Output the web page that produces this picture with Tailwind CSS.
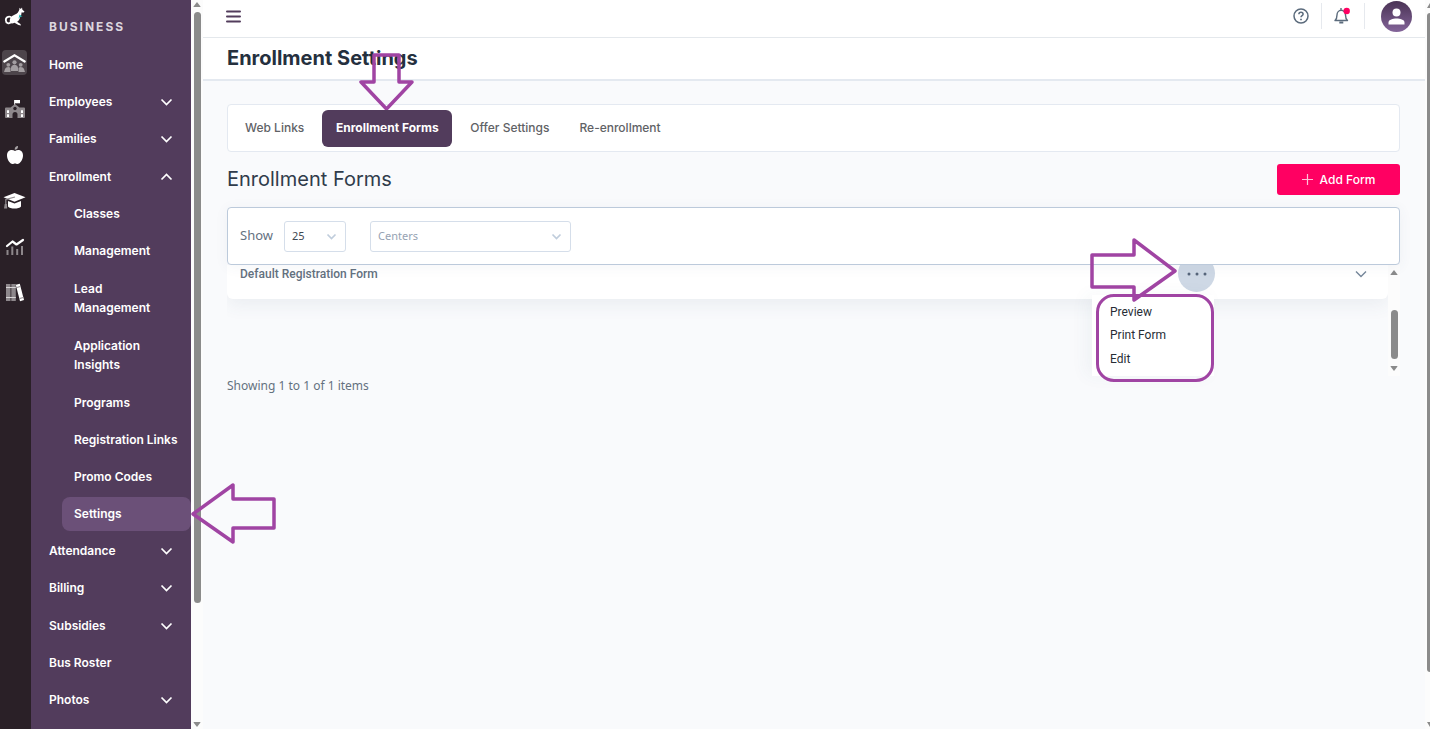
<!DOCTYPE html>
<html lang="en">
<head>
<meta charset="utf-8">
<meta name="viewport" content="width=device-width, initial-scale=1">
<title>Enrollment Settings</title>
<script src="https://cdn.jsdelivr.net/npm/@tailwindcss/browser@4"></script>
</head>
<body class="flex h-screen overflow-hidden bg-[#f9fafc] font-['Inter',sans-serif] text-[#52606f]">

<!-- Product rail -->
<nav aria-label="Products" class="flex w-[31px] shrink-0 flex-col items-start gap-[21px] bg-[#2a2027] pt-1 pl-0.5">
  <a href="#" aria-label="Dashboard" class="grid size-[25px] place-items-center">
    <svg width="22" height="20" viewBox="0 0 22 20"><path d="M8 11C6 8.800 1.800 9.500 1.800 13c0 3.500 3.500 4.200 5.200 2.200" fill="none" stroke="#fff" stroke-width="1.800" stroke-linecap="round"/><path d="M5.800 14.500C5.500 10.500 8.500 8.500 11 7.500c2.300-1 3.500-2.500 4.300-4.800L15.500.700l1.300 1.200L18 .500l.4 2.200 2.100 1.900-.8 1-2.200-.1c0 2.200-.6 3.500-1.400 4.700-.5 2.300-1.500 3.700-3 4.500l3.300 2.300.6 1.500-2.500-.6-4-2.100c-1.500.8-3 .9-4.200.3z" fill="#fff"/><path d="M15.500 7.500l3 1.900-2.300.3-1.700 2z" fill="#19b5b0"/></svg>
  </a>
  <a href="#" aria-label="Business" aria-current="true" class="grid size-[25px] place-items-center rounded bg-[#4d454b]">
    <svg width="23" height="20" viewBox="0 0 23 20"><path d="M1.300 8.500L11.500 2.300l10.200 6.200" fill="none" stroke="#fff" stroke-width="2.200" stroke-linecap="round"/><g fill="#a39ea1"><circle cx="11.500" cy="9.300" r="2.100"/><path d="M8 18v-3c0-2 1.500-3.300 3.500-3.300s3.500 1.300 3.500 3.300v3z"/><circle cx="5.300" cy="11.800" r="1.900"/><path d="M1 19l1-3c.5-1.300 1.800-2 3.300-2 1 0 1.700.4 2.200 1V19z"/><circle cx="17.700" cy="11.800" r="1.900"/><path d="M22 19l-1-3c-.5-1.300-1.800-2-3.300-2-1 0-1.700.4-2.200 1V19z"/></g></svg>
  </a>
  <a href="#" aria-label="School" class="grid size-[25px] place-items-center">
    <svg width="22" height="20" viewBox="0 0 22 20"><path d="M10.500 1v5" stroke="#d4d1d3"/><path d="M10.500 1H16v3.300h-5.500z" fill="#fff"/><path d="M1 9.500q0-1 1-1h4.500L11 5l4.500 3.500H20q1 0 1 1V18q0 1-1 1h-6.500v-3.500a2.500 2.500 0 00-5 0V19H2q-1 0-1-1z" fill="#8d878b"/><circle cx="11" cy="9.500" r="1.700" fill="#2a2027"/><g fill="#fff"><path d="M3 11.300h2V14H3zM3 15.300h2V18H3zM17 11.300h2V14h-2zM17 15.300h2V18h-2z"/></g></svg>
  </a>
  <a href="#" aria-label="Nutrition" class="grid size-[25px] place-items-center">
    <svg width="18" height="20" viewBox="0 0 18 20"><path d="M9 6C6.500 4.300 1 4.500 1 10.500 1 14.500 4 19 6.500 19c1 0 1.500-.5 2.500-.5s1.500.5 2.500.5c2.500 0 5.500-4.500 5.500-8.500C17 4.500 11.500 4.300 9 6z" fill="#fff"/><path d="M8.700 4.800C8.500 2.500 10 1 12 1c.2 2.300-1 3.800-3.300 3.800z" fill="#aaa5a8"/></svg>
  </a>
  <a href="#" aria-label="Academy" class="grid size-[25px] place-items-center">
    <svg width="23" height="18" viewBox="0 0 23 18"><path d="M11.500 1L22.500 5.300 11.500 9.800.5 5.300z" fill="#fff"/><path d="M5 9l6.500 2.500L18 9v5.500c-2 2.700-11 2.700-13 0z" fill="#fff"/><path d="M12 5L2.800 7.500V13" fill="none" stroke="#918b8f" stroke-width="1.200"/><path d="M1.700 12h2.100l.4 4.500H1z" fill="#918b8f"/></svg>
  </a>
  <a href="#" aria-label="Reports" class="grid size-[25px] place-items-center">
    <svg width="20" height="18" viewBox="0 0 20 18"><path d="M2 8l5.500-4.500 4 3L18 2" fill="none" stroke="#fff" stroke-width="2.200" stroke-linecap="round" stroke-linejoin="round"/><path d="M2.500 12v5M7.300 8.500V17M12.200 11v6M17 8v9" stroke="#8d878b" stroke-width="2"/></svg>
  </a>
  <a href="#" aria-label="Library" class="grid size-[25px] place-items-center">
    <svg width="20" height="19" viewBox="0 0 20 19"><path d="M1 1h4.500v17H1zM6.300 1h4.500v17H6.300z" fill="#8d878b"/><path d="M1 4.500h9.800M1 14.500h9.800" stroke="#d8d5d7"/><path d="M10.800 1.800l4-1L19 17l-4 1.200z" fill="#fff"/><path d="M11.500 4.500l4-1M14.500 15.500l4-1" stroke="#8d878b" stroke-width="1"/></svg>
  </a>
</nav>

<!-- Section menu -->
<nav aria-label="Business" class="flex w-40 shrink-0 flex-col bg-[#523c5c] pt-[19px] pb-3 text-xs font-semibold text-white">
  <h2 class="pl-[18px] text-xs leading-4 font-bold tracking-[2px] text-[#dcd6df]">BUSINESS</h2>
  <ul class="mt-[13px] flex grow flex-col justify-between">
    <li><a href="#" class="block py-2 pl-[18px] leading-[18px]">Home</a></li>
    <li><button class="flex w-full items-center justify-between py-2 pr-[18px] pl-[18px] leading-[18px]">Employees<svg width="13" height="8" viewBox="0 0 13 8" fill="none" stroke="currentColor" stroke-width="1.700"><path d="M1.500 1.500l5 5 5-5"/></svg></button></li>
    <li><button class="flex w-full items-center justify-between py-2 pr-[18px] pl-[18px] leading-[18px]">Families<svg width="13" height="8" viewBox="0 0 13 8" fill="none" stroke="currentColor" stroke-width="1.700"><path d="M1.500 1.500l5 5 5-5"/></svg></button></li>
    <li><button aria-expanded="true" class="flex w-full items-center justify-between py-2 pr-[18px] pl-[18px] leading-[18px]">Enrollment<svg width="13" height="8" viewBox="0 0 13 8" fill="none" stroke="currentColor" stroke-width="1.700"><path d="M1.500 6.500l5-5 5 5"/></svg></button></li>
    <li class="ml-[31px]"><a href="#" class="block py-2 pl-3 leading-[18px]">Classes</a></li>
    <li class="ml-[31px]"><a href="#" class="block py-2 pl-3 leading-[18px]">Management</a></li>
    <li class="ml-[31px]"><a href="#" class="block py-2 pl-3 leading-[19px]">Lead<br>Management</a></li>
    <li class="ml-[31px]"><a href="#" class="block py-2 pl-3 leading-[19px]">Application<br>Insights</a></li>
    <li class="ml-[31px]"><a href="#" class="block py-2 pl-3 leading-[18px]">Programs</a></li>
    <li class="ml-[31px]"><a href="#" class="block py-2 pl-3 leading-[18px] whitespace-nowrap">Registration Links</a></li>
    <li class="ml-[31px]"><a href="#" class="block py-2 pl-3 leading-[18px]">Promo Codes</a></li>
    <li class="relative ml-[31px]"><a href="#" aria-current="page" class="block rounded-lg bg-[#6b5078] py-2 pl-3 leading-[18px]">Settings</a>
      <svg aria-hidden="true" class="absolute top-1/2 left-full z-30 -translate-y-1/2" width="86" height="62" viewBox="0 0 86 62" fill="none" stroke="#a044a3" stroke-width="3.500" stroke-linejoin="round"><path d="M2 31L42 2v14h41v29H42v14z"/></svg>
    </li>
    <li><button class="flex w-full items-center justify-between py-2 pr-[18px] pl-[18px] leading-[18px]">Attendance<svg width="13" height="8" viewBox="0 0 13 8" fill="none" stroke="currentColor" stroke-width="1.700"><path d="M1.500 1.500l5 5 5-5"/></svg></button></li>
    <li><button class="flex w-full items-center justify-between py-2 pr-[18px] pl-[18px] leading-[18px]">Billing<svg width="13" height="8" viewBox="0 0 13 8" fill="none" stroke="currentColor" stroke-width="1.700"><path d="M1.500 1.500l5 5 5-5"/></svg></button></li>
    <li><button class="flex w-full items-center justify-between py-2 pr-[18px] pl-[18px] leading-[18px]">Subsidies<svg width="13" height="8" viewBox="0 0 13 8" fill="none" stroke="currentColor" stroke-width="1.700"><path d="M1.500 1.500l5 5 5-5"/></svg></button></li>
    <li><a href="#" class="block py-2 pl-[18px] leading-[18px]">Bus Roster</a></li>
    <li><button class="flex w-full items-center justify-between py-2 pr-[18px] pl-[18px] leading-[18px]">Photos<svg width="13" height="8" viewBox="0 0 13 8" fill="none" stroke="currentColor" stroke-width="1.700"><path d="M1.500 1.500l5 5 5-5"/></svg></button></li>
  </ul>
</nav>

<!-- Menu scrollbar -->
<div aria-hidden="true" class="flex w-3 shrink-0 flex-col items-center bg-[#fcfcfc] py-0.5 text-[#8b8b8b]">
  <svg width="8" height="6" viewBox="0 0 8 6" fill="currentColor"><path d="M4 0l3.500 4.500q0 .5-.5.500H1q-.5 0-.5-.500z"/></svg>
  <div class="mt-1 flex w-[7px] grow flex-col">
    <div class="h-5/6 rounded-full bg-[#8b8b8b]"></div>
  </div>
  <svg width="8" height="6" viewBox="0 0 8 6" fill="currentColor"><path d="M4 6l3.500-4.500Q7.500 1 7 1H1q-.5 0-.5.500z"/></svg>
</div>

<div class="flex min-w-0 grow flex-col">
  <header class="flex h-[38px] items-center justify-between border-b border-[#e4e8ec] bg-white pr-[13px] pl-[23px]">
    <button aria-label="Toggle menu" class="pb-1"><svg width="15" height="13" viewBox="0 0 15 13" stroke="#523c5c" stroke-width="2" stroke-linecap="round"><path d="M1 1.500h13M1 6.500h13M1 11.500h13"/></svg></button>
    <div class="flex items-center pb-[5px]">
      <button aria-label="Help" class="mr-3"><svg width="16" height="16" viewBox="0 0 16 16" fill="none" stroke="#5b6b7c" stroke-width="1.500"><circle cx="8" cy="8" r="7"/><path d="M5.900 6.300C5.900 3.700 10.100 3.700 10.100 6.300c0 1.400-2.100 1.400-2.100 3"/><path d="M8 10.700v1.500" stroke-width="1.700"/></svg></button>
      <div class="flex h-[26px] items-center border-x border-[#e6e9ee] pr-[13px] pl-[11px]">
        <button aria-label="Notifications"><svg width="18" height="18" viewBox="0 0 18 18" fill="none" stroke="#5b6b7c" stroke-width="1.400" stroke-linejoin="round"><path d="M8 1v2M2 13.500h12.500c-1.700-1.500-2-3-2-5.500C12.500 5.300 10.500 3.300 8.200 3.300S4 5.300 4 8c0 2.500-.3 4-2 5.500z"/><path d="M6.300 15.500h4" stroke-width="2"/><circle cx="13.700" cy="4" r="3.200" fill="#ff0062" stroke="none"/></svg></button>
      </div>
      <button aria-label="Account" class="ml-4 grid size-[31px] place-items-center rounded-full bg-linear-to-b from-[#4a3355] to-[#84659a]"><svg width="17" height="17" viewBox="0 0 17 17" fill="#fff"><circle cx="8.500" cy="4.500" r="4"/><path d="M0.500 16.500v-2c0-3 4.500-4 8-4s8 1 8 4v2z"/></svg></button>
    </div>
  </header>
  <div class="flex h-[43px] items-center border-b-2 border-[#e4e9f0] bg-white px-6 pb-0.5">
    <h1 class="text-xl font-bold text-[#25303e]">Enrollment Settings</h1>
  </div>

  <main class="flex grow flex-col pt-[23px] pr-[25px] pl-6">
    <div class="flex h-12 items-center rounded border border-[#e4e9f1] bg-white pl-[5px] text-xs font-medium text-[#5f6266]">
      <button class="h-[37px] px-3">Web Links</button>
      <div class="relative ml-1.5">
        <button aria-pressed="true" class="h-[37px] w-[130px] rounded-md bg-[#523c5c] font-bold text-white">Enrollment Forms</button>
        <svg aria-hidden="true" class="absolute bottom-full left-1/2 z-30 -translate-x-1/2" width="56" height="58" viewBox="0 0 56 58" fill="none" stroke="#a044a3" stroke-width="3.500" stroke-linejoin="round"><path d="M15 3h25v27h13L27.500 57 2 30h13z"/></svg>
      </div>
      <button class="ml-1.5 h-[37px] px-3">Offer Settings</button>
      <button class="ml-1.5 h-[37px] px-3">Re-enrollment</button>
    </div>

    <div class="mt-3 flex h-[31px] items-center justify-between">
      <h2 class="pb-0.5 text-xl text-[#303c4b]">Enrollment Forms</h2>
      <button class="flex h-[31px] w-[123px] items-center justify-center gap-[7px] rounded-[3px] bg-[#ff0062] text-xs font-medium text-white"><svg width="11" height="11" viewBox="0 0 11 11" stroke="#ffc0d8" stroke-width="1.200"><path d="M5.500 0v11M0 5.500h11"/></svg>Add Form</button>
    </div>

    <div class="relative z-10 mt-3 flex h-[58px] items-center rounded-[4px] border border-[#bccadb] bg-white pl-3 font-['Noto_Sans',sans-serif] shadow-[0_2px_14px_rgba(60,90,120,0.06)]">
      <label for="show" class="w-11 text-[13px] text-[#64717f]">Show</label>
      <div class="relative">
        <select id="show" class="h-[31px] w-[62px] appearance-none rounded-[3px] border border-[#d5deea] bg-white pl-[7px] text-[11px] text-[#3f4852]"><option>25</option><option>50</option></select>
        <svg class="pointer-events-none absolute top-3 right-[9px]" width="11" height="8" viewBox="0 0 11 8" fill="none" stroke="#c0cddc" stroke-width="1.700"><path d="M1.500 1.500l4 4 4-4"/></svg>
      </div>
      <div class="relative ml-6">
        <select aria-label="Centers" class="h-[31px] w-[201px] appearance-none rounded-[3px] border border-[#d5deea] bg-white pl-[7px] text-[11px] text-[#96a3b3]"><option>Centers</option></select>
        <svg class="pointer-events-none absolute top-3 right-[9px]" width="11" height="8" viewBox="0 0 11 8" fill="none" stroke="#c0cddc" stroke-width="1.700"><path d="M1.500 1.500l4 4 4-4"/></svg>
      </div>
    </div>

    <div class="relative">
      <!-- Scrolled list of forms -->
      <div class="flex h-[111px] overflow-hidden">
        <div class="min-w-0 grow">
          <div class="flex h-[34px] justify-between rounded-b-md bg-white pl-[13px] shadow-[0_6px_18px_rgba(60,90,110,0.08)]">
            <span class="font-['Roboto',sans-serif] text-xs leading-[18px] font-medium text-[#64717f]">Default Registration Form</span>
            <div class="flex">
              <button aria-label="Form actions" aria-expanded="true" class="-mt-[10px] mr-[140px] grid size-[37px] place-items-center rounded-full bg-[#ced8e5]"><svg width="20" height="4" viewBox="0 0 20 4" fill="#56657a"><circle cx="2" cy="2" r="1.500"/><circle cx="10" cy="2" r="1.500"/><circle cx="18" cy="2" r="1.500"/></svg></button>
              <button aria-label="Expand form" class="mr-[21px] h-[18px]"><svg width="12" height="8" viewBox="0 0 12 8" fill="none" stroke="#76879a" stroke-width="1.400"><path d="M1 1.500l5 5 5-5"/></svg></button>
            </div>
          </div>
          <ul class="absolute top-[30px] right-[186px] h-[81px] w-[122px] bg-white pt-[5px] pl-[18px] font-['Roboto',sans-serif] text-xs text-[#272d35] shadow-[-6px_0_16px_rgba(60,90,110,0.05)]">
            <li><button class="block h-[23px]">Preview</button></li>
            <li><button class="block h-[24px]">Print Form</button></li>
            <li><button class="block h-[24px]">Edit</button></li>
          </ul>
        </div>
        <div aria-hidden="true" class="flex w-3 shrink-0 flex-col items-center bg-[#fcfcfc] py-[5px] text-[#8b8b8b]">
          <svg width="8" height="6" viewBox="0 0 8 6" fill="currentColor"><path d="M4 0l3.500 4.500q0 .5-.5.500H1q-.5 0-.5-.500z"/></svg>
          <div class="flex w-[7px] grow flex-col justify-end pb-[6px]"><div class="h-[49px] rounded-full bg-[#8b8b8b]"></div></div>
          <svg width="8" height="6" viewBox="0 0 8 6" fill="currentColor"><path d="M4 6l3.500-4.500Q7.500 1 7 1H1q-.5 0-.5.500z"/></svg>
        </div>
      </div>
      <!-- Callouts round the actions menu -->
      <svg aria-hidden="true" class="absolute -top-7 right-[222px] z-30" width="88" height="66" viewBox="0 0 88 66" fill="none" stroke="#a044a3" stroke-width="3.500" stroke-linejoin="round"><path d="M2 18h42V3l41 31-41 29V50H2z"/></svg>
      <div aria-hidden="true" class="pointer-events-none absolute top-[29px] right-[186px] z-20 h-[88px] w-[118px] rounded-[18px] border-[3px] border-[#a044a3]"></div>
    </div>

    <p class="font-['Noto_Sans',sans-serif] text-xs leading-5 text-[#64717f]">Showing 1 to 1 of 1 items</p>
  </main>
</div>

<!-- Page scrollbar -->
<div aria-hidden="true" class="flex w-[5px] shrink-0 flex-col items-end justify-between overflow-hidden bg-[#fcfcfc] pt-[3px] pb-0.5">
  <svg width="3" height="5" viewBox="0 0 3 5" fill="#8b8b8b"><path d="M3 0v5H0z"/></svg>
  <div class="mt-[5px] mb-auto h-[91%] w-[3px] rounded-l-full bg-[#8b8b8b]"></div>
  <svg width="3" height="5" viewBox="0 0 3 5" fill="#8b8b8b"><path d="M0 0h3v5z"/></svg>
</div>
</body>
</html>
